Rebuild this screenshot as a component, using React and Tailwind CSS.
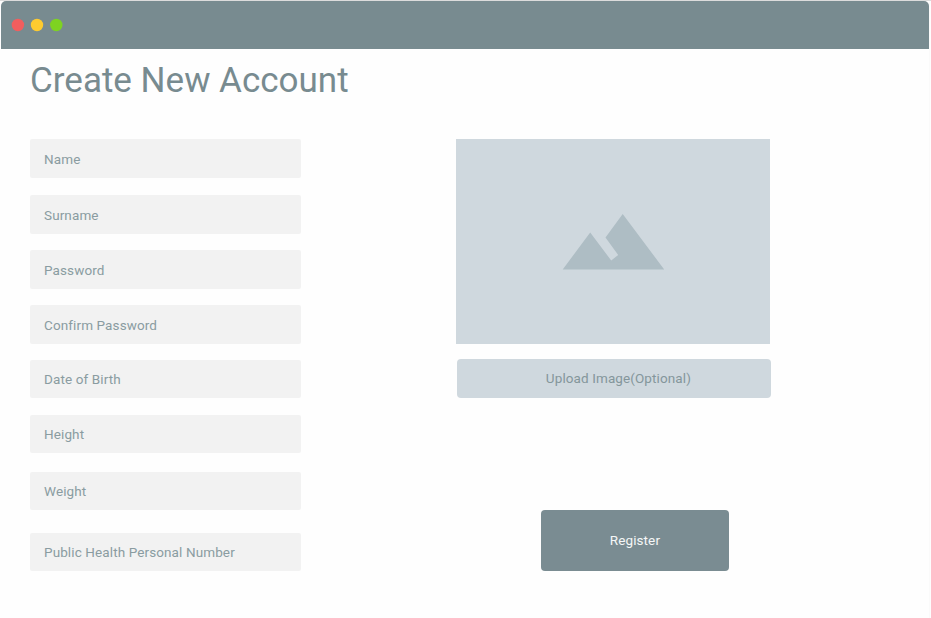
const fields = [
  { label: "Name", gap: "" },
  { label: "Surname", gap: "mt-[17.5px]" },
  { label: "Password", gap: "mt-[16.6px]" },
  { label: "Confirm Password", gap: "mt-[16.8px]" },
  { label: "Date of Birth", gap: "mt-[15.9px]" },
  { label: "Height", gap: "mt-[16.7px]" },
  { label: "Weight", gap: "mt-[18.5px]" },
  { label: "Public Health Personal Number", gap: "mt-[22.6px]" },
];

function TitleBar() {
  return (
    <header className="flex h-12 items-center rounded-t-[5px] bg-[#788b90] pl-[10px]">
      <svg className="h-4 w-14" viewBox="0 0 56 16">
        <circle cx="6.9" cy="8" r="6.2" fill="#f25e5e" />
        <circle cx="26" cy="8" r="6.2" fill="#fecb2f" />
        <circle cx="45.3" cy="8" r="6.2" fill="#7ed321" />
      </svg>
    </header>
  );
}

function Field({ label, gap }) {
  return (
    <div
      className={`flex h-[38.4px] items-center rounded-[2px] bg-[#f2f2f2] pt-[1.2px] pl-[14px] text-[13.5px] tracking-[0.11px] text-[#8a9ca1] ${gap}`}
    >
      {label}
    </div>
  );
}

function ImagePlaceholder() {
  return (
    <div className="-ml-[0.6px] flex h-[205px] w-[314px] items-center justify-center bg-[#cfd8de]">
      <svg className="ml-px h-[56px] w-[104px]" viewBox="0 0 104 56" fill="#aebdc4">
        <path d="M1.7 55.5 29.2 18.5 50.2 46.5 57.2 41 44.5 23.5 61.7 0 103.2 55.5Z" />
      </svg>
    </div>
  );
}

export default function App() {
  return (
    <main className="h-[618px] w-[931px] overflow-hidden border-t border-[#dcdcdc] bg-[#fefefe] font-['Roboto',sans-serif]">
      <div className="ml-px h-full w-[929px] border-r border-[#fafafa]">
        <TitleBar />
        <h1 className="mt-[10px] ml-[29px] h-11 text-[35px] leading-[44px] whitespace-nowrap text-[#788b90]">
          Create New Account
        </h1>
        <div className="mt-[36.3px] ml-[29px] flex">
          <form className="flex w-[270.5px] flex-col">
            {fields.map((field) => (
              <Field key={field.label} {...field} />
            ))}
          </form>
          <section className="ml-[155.9px] flex w-[314px] flex-col">
            <ImagePlaceholder />
            <button
              type="button"
              className="mt-[15px] ml-[0.5px] h-[38.5px] w-full rounded-[4px] bg-[#cfd8de] pl-[9px] text-[13.5px] tracking-[0.1px] text-[#84969b]"
            >
              Upload Image(Optional)
            </button>
            <button
              type="button"
              className="mt-[112.5px] ml-[84.8px] h-[61px] w-[187.5px] rounded-[4px] bg-[#7a8c92] pb-px text-[13.5px] tracking-[0.1px] text-[#f5f7f7]"
            >
              Register
            </button>
          </section>
        </div>
      </div>
    </main>
  );
}
